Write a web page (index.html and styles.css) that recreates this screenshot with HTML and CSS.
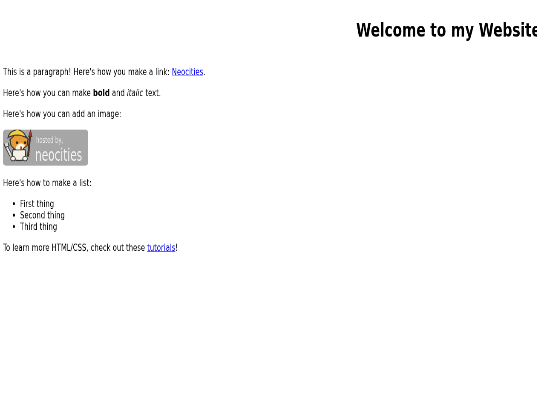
FILE: index.html
```html
<!DOCTYPE html>
<html lang="en">
<head>
  <meta charset="UTF-8">
  <title>The web site of me</title>
  <link rel="stylesheet" href="styles.css">
</head>
<body>

  <div class="page">
    <h1 class="title">Welcome to my Website</h1>

    <p>This is a paragraph! Here's how you make a link: <a href="#">Neocities</a>.</p>
    <p>Here's how you can make <strong>bold</strong> and <em>italic</em> text.</p>
    <p>Here's how you can add an image:</p>

    <!-- neocities badge -->
    <svg class="badge" viewBox="0 0 85 36" preserveAspectRatio="none">
      <rect x="0" y="0" width="85" height="36" rx="3" fill="#a6a6a6"/>
      <!-- wrench -->
      <path d="M3 16 L8 26" stroke="#444" stroke-width="3.500" fill="none"/>
      <path d="M3 16 L8 26" stroke="#e6e6e6" stroke-width="1.800" fill="none"/>
      <path d="M1 14 L2.500 18 L6 16 L5 13" stroke="#444" stroke-width="1" fill="#ddd"/>
      <!-- brush -->
      <path d="M27 6 L25 27" stroke="#4a3020" stroke-width="2"/>
      <path d="M27.500 0 L29 7 L25.500 7 Z" fill="#a8323a" stroke="#4a3020" stroke-width="0.500"/>
      <!-- cat -->
      <path d="M10 20 L22 20 L23 29 Q16 33 9 29 Z" fill="#f6f2e8" stroke="#333" stroke-width="1"/>
      <path d="M7 10 L12 5 L21 5 L25 9 L24 16 L19 20 L12 20 L8 16 Z" fill="#e89a35" stroke="#333" stroke-width="1"/>
      <path d="M5 8 Q6 2 14 0 Q21 1 23 8 Q14 3 5 8 Z" fill="#f5cf3f" stroke="#333" stroke-width="1"/>
      <path d="M13 17 Q18 11 22 16 L19 20 L13 20 Z" fill="#fbf3e0"/>
      <circle cx="14" cy="13" r="1.300" fill="#222"/>
      <circle cx="22" cy="13" r="1.300" fill="#222"/>
      <path d="M18 17 L18 20" stroke="#b03030" stroke-width="1.500"/>
      <circle cx="10" cy="29" r="2.300" fill="#f6f2e8" stroke="#333" stroke-width="0.800"/>
      <circle cx="22" cy="29" r="2.300" fill="#f6f2e8" stroke="#333" stroke-width="0.800"/>
      <text class="badge-small" x="33" y="13" textLength="27" lengthAdjust="spacingAndGlyphs">hosted by,</text>
      <text class="badge-large" x="32" y="31" textLength="47" lengthAdjust="spacingAndGlyphs">neocities</text>
    </svg>

    <p>Here's how to make a list:</p>

    <ul>
      <li>First thing</li>
      <li>Second thing</li>
      <li>Third thing</li>
    </ul>

    <p>To learn more HTML/CSS, check out these <a href="#">tutorials</a>!</p>
  </div>

</body>
</html>
```

FILE: styles.css
```css
html, body {
  height: 100%;
  overflow: hidden;
}
body {
  margin: 0;
  background: white;
  color: black;
  font-family: "DejaVu Sans", sans-serif;
  font-size: 16px;
  line-height: 19.200px;
}
/* the shot is a big page scaled down, more sideways than up and down */
.page {
  width: 1253px;
  padding: 32px 7px 0;
  transform: scale(0.426, 0.6);
  transform-origin: left top;
  will-change: transform;
  filter: blur(0.5px);
}
.title {
  margin: 0 0 41px 829px;
  font-size: 32px;
  line-height: 37px;
  white-space: nowrap;
  overflow: hidden;
}
p {
  margin: 16px 0;
}
ul {
  margin: 16px 0;
  padding-left: 40px;
}
.badge {
  display: block;
  width: 200px;
  height: 60px;
  margin: 10px 0 19px;
}
.badge-small {
  font-family: "DejaVu Sans", sans-serif;
  font-size: 8px;
  fill: #f0f0f0;
}
.badge-large {
  font-family: "DejaVu Sans", sans-serif;
  font-size: 17px;
  fill: #f4f4f4;
}
```
